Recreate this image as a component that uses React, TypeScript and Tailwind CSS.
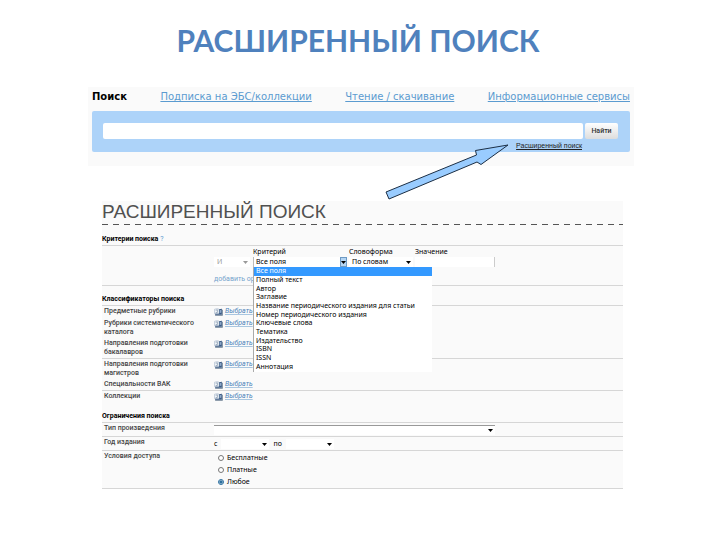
import type { ReactNode } from 'react';

const criteria = [
  'Все поля',
  'Полный текст',
  'Автор',
  'Заглавие',
  'Название периодического издания для статьи',
  'Номер периодического издания',
  'Ключевые слова',
  'Тематика',
  'Издательство',
  'ISBN',
  'ISSN',
  'Аннотация',
];

const classifiers = [
  { label: 'Предметные рубрики', className: 'h-3' },
  { label: 'Рубрики систематического каталога', className: 'h-5' },
  { label: 'Направления подготовки бакалавров', className: 'h-5 border-b' },
  { label: 'Направления подготовки магистров', className: 'h-5' },
  { label: 'Специальности ВАК', className: 'h-[11px] border-b' },
  { label: 'Коллекции', className: 'h-3' },
];

const BookIcon = () => (
  <svg viewBox="0 0 16 14" className="w-[9px] h-2 shrink-0" aria-hidden="true">
    <path d="M1 2l5-1 3 1v8H1z" fill="#f4f7fa" stroke="#9fb1c6" />
    <path d="M9 2l5-1v11H2v-2h7z" fill="#3b5b85" />
    <path d="M10 4l3-1v5l-3 1z" fill="#8fa9c9" />
    <path d="M3 4l3-1v5M3 8h3" fill="none" stroke="#5f7896" />
    <path d="M2 13h13V3" fill="none" stroke="#24405f" />
  </svg>
);

const Caret = ({ className = '' }: { className?: string }) => (
  <svg viewBox="0 0 5 3" className={`w-[5px] h-[3px] pointer-events-none ${className}`} aria-hidden="true">
    <path d="M0 0h5L2.5 3z" fill="currentColor" />
  </svg>
);

function Select({ id, label, value, className }: { id: string; label: string; value?: string; className: string }) {
  return (
    <div className={`relative flex items-center h-[10px] bg-white ${className}`}>
      <select id={id} aria-label={label} className="appearance-none w-full h-[10px] pl-[3px] leading-[10px] bg-transparent focus:outline-none">
        <option>{value}</option>
      </select>
      <Caret className="absolute right-[2px]" />
    </div>
  );
}

function SectionTitle({ children, className }: { children: ReactNode; className: string }) {
  return <h3 className={`flex border-b border-[#d6d6d6] leading-[10px] font-bold font-['Roboto',sans-serif] text-black ${className}`}>{children}</h3>;
}

function Row({ label, className, children }: { label: string; className: string; children: ReactNode }) {
  return (
    <div className={`flex box-content border-[#d6d6d6] ${className}`}>
      <div className="w-28 pr-4 pl-[2px] shrink-0 font-medium font-['Roboto',sans-serif] text-[#444] leading-[9px] pt-px">{label}</div>
      <div className="flex-1">{children}</div>
    </div>
  );
}

export default function App() {
  return (
    <main className="min-h-screen bg-white font-['Noto_Sans',sans-serif]">
      <h1 className="pt-[17px] pr-1 text-center text-[30px] leading-[46px] font-bold text-[#4f81bd] font-['Lato',sans-serif]">РАСШИРЕННЫЙ ПОИСК</h1>

      <section className="relative mt-6 ml-[88px] mr-[86px] bg-[#fafafa] px-1 pb-[14px]">
        <nav className="flex justify-between whitespace-nowrap text-[10px] leading-5 h-6 font-['DejaVu_Sans',sans-serif] text-[#5b9bd0]">
          <span className="font-bold text-black">Поиск</span>
          <a href="#subscription" className="underline">Подписка на ЭБС/коллекции</a>
          <a href="#reading" className="underline">Чтение / скачивание</a>
          <a href="#services" className="underline">Информационные сервисы</a>
        </nav>
        <form className="bg-[#add3f9] rounded-xs h-[41px] pt-3 pl-[11px] pr-3">
          <div className="flex gap-[2px]">
            <input type="text" aria-label="Поиск" className="flex-1 min-w-0 h-4 bg-white rounded-xs focus:outline-none" />
            <button type="button" className="w-[33px] h-4 rounded-xs bg-linear-to-b from-white to-[#dddddd] text-[7px] font-medium font-['Roboto',sans-serif] text-[#333]">Найти</button>
          </div>
          <div className="flex justify-end pr-9">
            <a href="#advanced" className="text-[7px] leading-[14px] underline text-[#222] font-['Liberation_Sans',sans-serif]">Расширенный поиск</a>
          </div>
        </form>
        <svg viewBox="0 0 126 58" className="absolute left-[297px] top-[56px] w-[126px] h-[58px]" aria-hidden="true">
          <path d="M123 2L90.500 7.500l1 4.500L1 49l3 7L92 19l4 2.500z" fill="#99ccff" stroke="#1c2f45" strokeWidth="1" />
        </svg>
      </section>

      <section className="mt-[35px] ml-[102px] mr-[97px] bg-[#fafafa] text-[7px] text-black">
        <h2 className="text-[19px] leading-[21px] h-[23px] text-[#505050] font-['Liberation_Sans',sans-serif]">РАСШИРЕННЫЙ ПОИСК</h2>
        <div className="h-px bg-[repeating-linear-gradient(90deg,#555_0_6px,transparent_6px_11px)]" />

        <SectionTitle className="h-[21px] pt-[9px]">
          Критерии поиска <a href="#help" className="pl-[2px] font-normal text-[#5b9bd0]">?</a>
        </SectionTitle>
        <div className="h-10 pl-28 border-b border-[#d6d6d6] flex items-start pt-px">
          <div className="w-[39px] pt-[10px] text-[#999]">
            <Select id="operator" label="Оператор" value="И" className="w-9" />
            <a href="#add" className="block mt-2 whitespace-nowrap leading-[9px] text-[#75a3cc] font-['Roboto',sans-serif]">добавить ор</a>
          </div>
          <div className="relative w-[96px]">
            <label htmlFor="criterion" className="block leading-[10px]">Критерий</label>
            <div className="relative flex items-center w-[94px] h-[10px] bg-white border-l border-[#bbb]">
              <select id="criterion" className="appearance-none w-full h-[10px] pl-[2px] leading-[10px] focus:outline-none">
                <option>Все поля</option>
              </select>
              <span className="absolute right-0 w-[7px] h-[10px] bg-[#b5d5f3] border border-[#6d9ac4] flex items-center justify-center pointer-events-none">
                <Caret />
              </span>
            </div>
            <ul className="absolute z-10 top-5 left-0 w-[179px] h-[105px] flex flex-col bg-white border-l border-[#aaa] pb-px">
              {criteria.map((item, i) => (
                <li key={item} className={`flex-1 flex items-center pl-[2px] leading-[8px] whitespace-nowrap ${i === 0 ? 'bg-[#3399ff] text-white' : ''}`}>{item}</li>
              ))}
            </ul>
          </div>
          <div className="w-[66px]">
            <label htmlFor="form" className="block leading-[10px]">Словоформа</label>
            <Select id="form" label="Словоформа" value="По словам" className="w-[64px]" />
          </div>
          <div>
            <label htmlFor="value" className="block leading-[10px]">Значение</label>
            <input id="value" type="text" className="block w-20 h-[10px] bg-white border-r border-[#ccc] focus:outline-none" />
          </div>
        </div>

        <SectionTitle className="h-5 pt-2">Классификаторы поиска</SectionTitle>
        {classifiers.map(({ label, className }) => (
          <Row key={label} label={label} className={className}>
            <a href="#choose" className="flex items-center gap-[2px] h-[11px] italic text-[#4f86bb] font-['Roboto',sans-serif]">
              <BookIcon />
              <span className="underline decoration-[#a9c6e0]">Выбрать</span>
            </a>
          </Row>
        ))}

        <SectionTitle className="h-5 pt-2">Ограничения поиска</SectionTitle>
        <Row label="Тип произведения" className="h-[13px] border-b">
          <Select id="type" label="Тип произведения" className="mt-[2px] w-[281px] border-t border-[#999]" />
        </Row>
        <Row label="Год издания" className="h-[13px] border-b">
          <div className="flex items-center gap-1 pt-[2px] leading-[10px]">
            <label htmlFor="from">с</label>
            <Select id="from" label="с" className="w-12" />
            <label htmlFor="to">по</label>
            <Select id="to" label="по" className="w-12" />
          </div>
        </Row>
        <Row label="Условия доступа" className="h-[37px] border-b">
          <div className="flex flex-col pl-1 pt-px">
            {['Бесплатные', 'Платные', 'Любое'].map((item) => (
              <label key={item} className="flex items-center gap-[3px] h-3">
                <input type="radio" name="access" defaultChecked={item === 'Любое'} className="w-[6px] h-[6px] accent-[#2b6e9e]" />
                {item}
              </label>
            ))}
          </div>
        </Row>
      </section>
    </main>
  );
}
